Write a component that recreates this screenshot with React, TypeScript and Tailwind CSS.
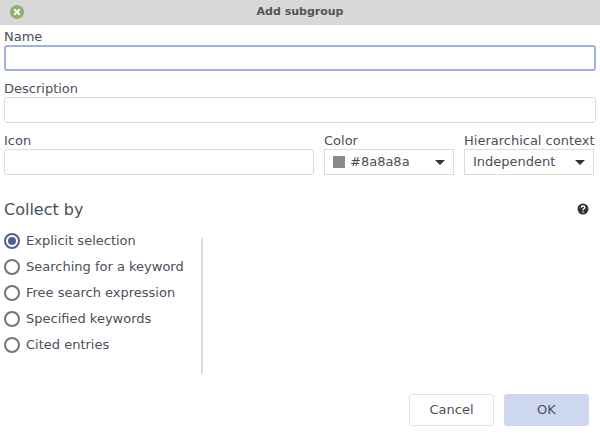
const options = [
	{ label: "Explicit selection", checked: true },
	{ label: "Searching for a keyword", checked: false },
	{ label: "Free search expression", checked: false },
	{ label: "Specified keywords", checked: false },
	{ label: "Cited entries", checked: false },
];

function Radio({ label, checked }: { label: string; checked: boolean }) {
	return (
		<div className="flex h-[26px] items-center">
			<span className={`flex h-[16px] w-[16px] items-center justify-center rounded-full border-2 ${checked ? "border-[#50618f]" : "border-[#757575]"}`}>
				{checked && <span className="h-[8px] w-[8px] rounded-full bg-[#50618f]" />}
			</span>
			<span className="ml-[6px] text-[13px] leading-[26px]">{label}</span>
		</div>
	);
}

function FieldLabel({ text }: { text: string }) {
	return <label className="h-[20px] whitespace-nowrap pt-[2px] text-[13px] leading-[20px]">{text}</label>;
}

function Field({ label, focus }: { label: string; focus?: boolean }) {
	return (
		<div className="flex flex-col">
			<FieldLabel text={label} />
			{focus ? (
				<div className="h-[26px] rounded-[3px] border-2 border-[#9fb1e3] bg-white" />
			) : (
				<div className="h-[26px] rounded-[3px] border border-[#dcdcdc] bg-white" />
			)}
		</div>
	);
}

function Select({ children }: { children: React.ReactNode }) {
	return (
		<div className="flex h-[26px] items-center justify-between border border-[#dcdcdc] bg-white pl-[8px] pr-[8px] text-[13px]">
			{children}
			<span className="h-0 w-0 border-x-[5px] border-t-[5px] border-x-transparent border-t-[#333333]" />
		</div>
	);
}

export default function App() {
	return (
		<div className="flex h-[436px] w-[600px] flex-col bg-white font-['DejaVu_Sans',sans-serif] text-[#4a4f5c]">
			<div className="relative flex h-[25px] items-center justify-center bg-[#d8d8d8]">
				<span className="absolute left-[10px] top-[5px] flex h-[14px] w-[14px] items-center justify-center rounded-full bg-[#8cb16b]">
					<svg width="8" height="8" viewBox="0 0 8 8">
						<path d="M1.2 1.2 6.8 6.8M6.8 1.2 1.2 6.8" stroke="#ffffff" strokeWidth="2" />
					</svg>
				</span>
				<span className="text-[11px] font-bold text-[#555555]">Add subgroup</span>
			</div>

			<div className="flex flex-col gap-[6px] px-[4px]">
				<Field label="Name" focus />
				<Field label="Description" />
				<div className="flex">
					<div className="w-[310px]">
						<Field label="Icon" />
					</div>
					<div className="ml-[10px] flex w-[130px] flex-col">
						<FieldLabel text="Color" />
						<Select>
							<span className="flex items-center">
								<span className="h-[12px] w-[12px] bg-[#8a8a8a]" />
								<span className="ml-[5px]">#8a8a8a</span>
							</span>
						</Select>
					</div>
					<div className="ml-[10px] flex w-[130px] flex-col">
						<FieldLabel text="Hierarchical context" />
						<Select>
							<span>Independent</span>
						</Select>
					</div>
				</div>
			</div>

			<div className="mt-[24px] flex items-center justify-between pl-[4px] pr-[11px]">
				<span className="text-[16px] leading-[22px]">Collect by</span>
				<svg width="12" height="12" viewBox="0 0 12 12" className="mb-[2px]">
					<circle cx="6" cy="6" r="5.5" fill="#333333" />
					<path d="M4.2 4.6C4.3 3.6 5 3 6 3s1.8.6 1.8 1.5c0 1.3-1.7 1.3-1.8 2.6" fill="none" stroke="#ffffff" strokeWidth="1.3" />
					<circle cx="6" cy="9" r="0.8" fill="#ffffff" />
				</svg>
			</div>

			<div className="mt-[7px] flex h-[146px] pl-[4px]">
				<div className="flex w-[197px] flex-col">
					{options.map((option) => (
						<Radio key={option.label} {...option} />
					))}
				</div>
				<div className="mt-[10px] w-[2px] bg-[#dcdcdc]" />
			</div>

			<div className="mt-[20px] flex justify-end gap-[10px] pr-[11px]">
				<button className="h-[32px] w-[85px] rounded-[3px] border border-[#e2e2e2] bg-white text-[13px]">Cancel</button>
				<button className="h-[32px] w-[85px] rounded-[3px] bg-[#cdd7f0] text-[13px]">OK</button>
			</div>
		</div>
	);
}
